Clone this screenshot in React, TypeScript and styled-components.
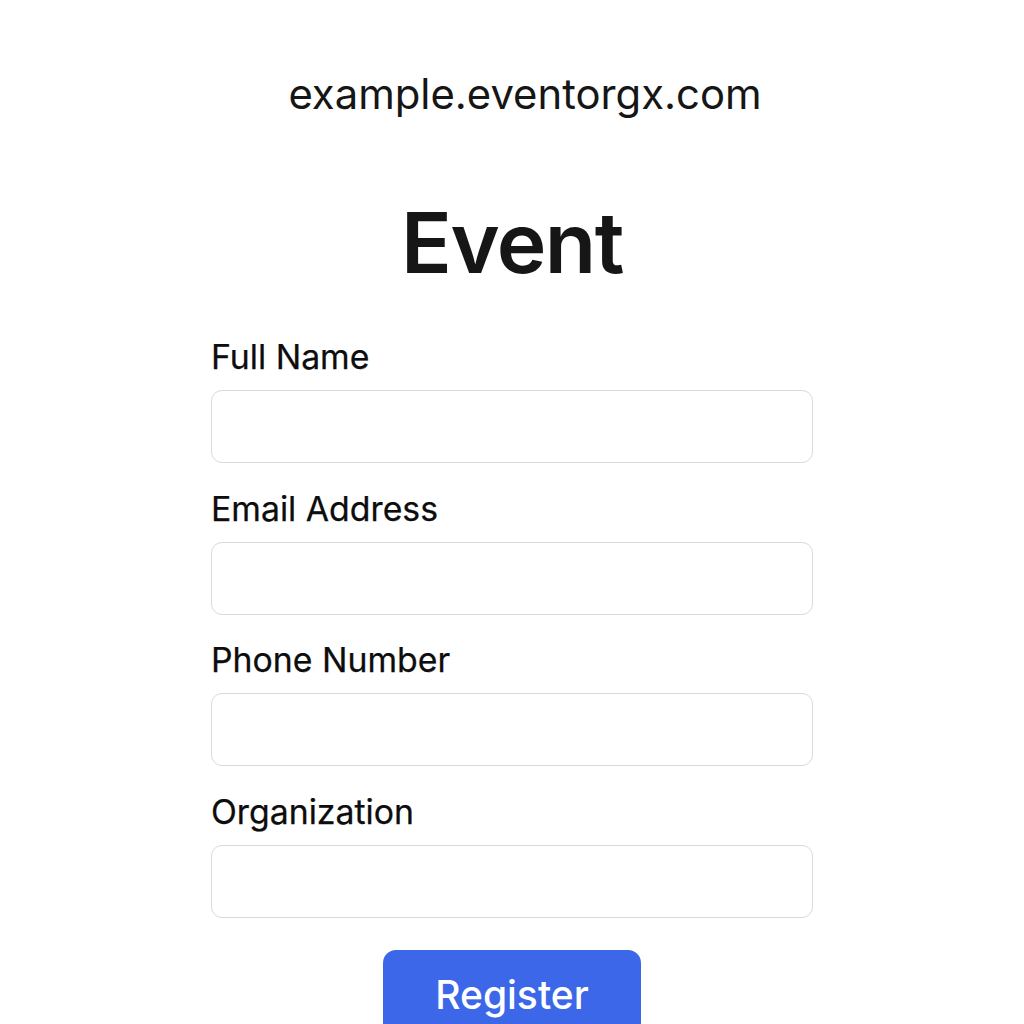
import React from "react";
import styled, { createGlobalStyle } from "styled-components";

const Global = createGlobalStyle`
  html, body { margin: 0; padding: 0; background: #ffffff; }
  body { font-family: Inter, "Noto Sans", sans-serif; color: #111; }
`;

const Page = styled.div`
  width: 1024px;
  height: 1024px;
  overflow: hidden;
  display: flex;
  flex-direction: column;
  align-items: center;
`;

const Domain = styled.div`
  margin-top: 67px;
  margin-left: 26px;
  font-size: 41.8px;
  line-height: 54px;
  font-weight: 400;
  color: #161616;
`;

const Title = styled.h1`
  margin: 72px 0 0;
  font-size: 84px;
  line-height: 100px;
  font-weight: 600;
  color: #161616;
  letter-spacing: -1.5px;
`;

const Form = styled.form`
  width: 602px;
  margin-top: 45px;
  display: flex;
  flex-direction: column;
`;

const Field = styled.div`
  display: flex;
  flex-direction: column;
  gap: 14px;
  margin-bottom: 26.7px;

  &:last-of-type {
    margin-bottom: 32px;
  }
`;

const Label = styled.label`
  font-size: 33.8px;
  line-height: 38px;
  font-weight: 400;
  color: #0d0d0d;
  -webkit-text-stroke: 0.25px #0d0d0d;
`;

const Input = styled.input`
  box-sizing: border-box;
  width: 602px;
  height: 73px;
  border: 1.5px solid #d6dbe1;
  border-radius: 11px;
  background: #fff;
  font-size: 24px;
  padding: 0 18px;
  outline: none;
`;

const Button = styled.button`
  align-self: center;
  width: 258px;
  height: 100px;
  flex-shrink: 0;
  border: none;
  border-radius: 13px;
  background: #3b67e8;
  color: #fff;
  font-family: Inter, sans-serif;
  font-size: 39px;
  line-height: 46px;
  font-weight: 500;
  padding: 22px 0 0;
  display: flex;
  align-items: flex-start;
  justify-content: center;
  box-sizing: border-box;
`;

const fields = ["Full Name", "Email Address", "Phone Number", "Organization"];

export default function App() {
  return (
    <>
      <Global />
      <Page>
        <Domain>example.eventorgx.com</Domain>
        <Title>Event</Title>
        <Form onSubmit={(e) => e.preventDefault()}>
          {fields.map((f) => (
            <Field key={f}>
              <Label>{f}</Label>
              <Input type="text" />
            </Field>
          ))}
          <Button type="submit">Register</Button>
        </Form>
      </Page>
    </>
  );
}
